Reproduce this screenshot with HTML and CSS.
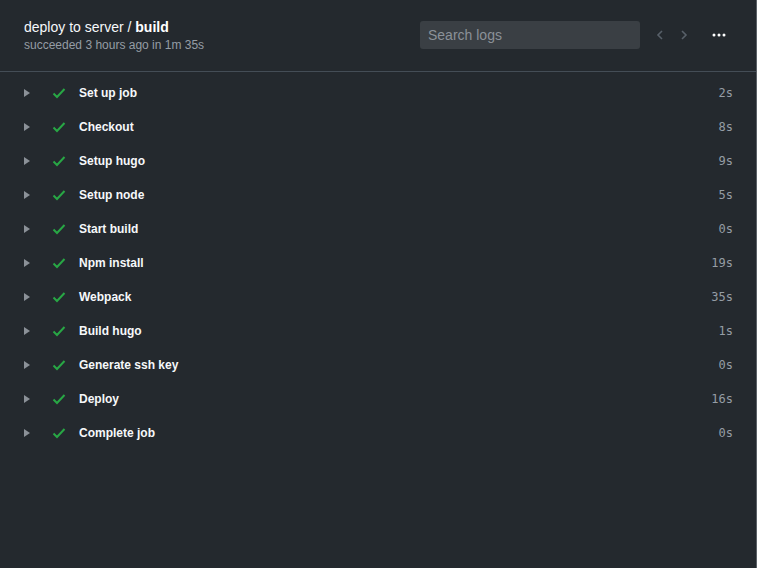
FILE: index.html
```html
<!DOCTYPE html>
<html>
<head>
<meta charset="utf-8">
<link rel="stylesheet" href="styles.css">
</head>
<body>
<div class="panel">
  <header class="head">
    <div class="titles">
      <div class="title">deploy to server / <b>build</b></div>
      <div class="sub">succeeded 3 hours ago in 1m 35s</div>
    </div>
    <div class="tools">
      <input class="search" type="text" placeholder="Search logs">
      <div class="navs">
        <svg class="nav" width="10" height="12" viewBox="0 0 10 12"><path d="M7 2 L3 6 L7 10" fill="none" stroke="currentColor" stroke-width="1.6"/></svg>
        <svg class="nav" width="10" height="12" viewBox="0 0 10 12"><path d="M3 2 L7 6 L3 10" fill="none" stroke="currentColor" stroke-width="1.6"/></svg>
      </div>
      <svg class="more" width="14" height="4" viewBox="0 0 14 4"><circle cx="2" cy="2" r="1.5" fill="#fff"/><circle cx="7" cy="2" r="1.5" fill="#fff"/><circle cx="12" cy="2" r="1.5" fill="#fff"/></svg>
    </div>
  </header>
  <ul class="steps">
    <li class="step"><span class="tri"></span><svg class="check" width="14" height="12" viewBox="0 0 14 12"><path d="M1.5 6.5 L5 10 L12.5 2" fill="none" stroke="#28a745" stroke-width="2"/></svg><span class="name">Set up job</span><span class="dur">2s</span></li>
    <li class="step"><span class="tri"></span><svg class="check" width="14" height="12" viewBox="0 0 14 12"><path d="M1.5 6.5 L5 10 L12.5 2" fill="none" stroke="#28a745" stroke-width="2"/></svg><span class="name">Checkout</span><span class="dur">8s</span></li>
    <li class="step"><span class="tri"></span><svg class="check" width="14" height="12" viewBox="0 0 14 12"><path d="M1.5 6.5 L5 10 L12.5 2" fill="none" stroke="#28a745" stroke-width="2"/></svg><span class="name">Setup hugo</span><span class="dur">9s</span></li>
    <li class="step"><span class="tri"></span><svg class="check" width="14" height="12" viewBox="0 0 14 12"><path d="M1.5 6.5 L5 10 L12.5 2" fill="none" stroke="#28a745" stroke-width="2"/></svg><span class="name">Setup node</span><span class="dur">5s</span></li>
    <li class="step"><span class="tri"></span><svg class="check" width="14" height="12" viewBox="0 0 14 12"><path d="M1.5 6.5 L5 10 L12.5 2" fill="none" stroke="#28a745" stroke-width="2"/></svg><span class="name">Start build</span><span class="dur">0s</span></li>
    <li class="step"><span class="tri"></span><svg class="check" width="14" height="12" viewBox="0 0 14 12"><path d="M1.5 6.5 L5 10 L12.5 2" fill="none" stroke="#28a745" stroke-width="2"/></svg><span class="name">Npm install</span><span class="dur">19s</span></li>
    <li class="step"><span class="tri"></span><svg class="check" width="14" height="12" viewBox="0 0 14 12"><path d="M1.5 6.5 L5 10 L12.5 2" fill="none" stroke="#28a745" stroke-width="2"/></svg><span class="name">Webpack</span><span class="dur">35s</span></li>
    <li class="step"><span class="tri"></span><svg class="check" width="14" height="12" viewBox="0 0 14 12"><path d="M1.5 6.5 L5 10 L12.5 2" fill="none" stroke="#28a745" stroke-width="2"/></svg><span class="name">Build hugo</span><span class="dur">1s</span></li>
    <li class="step"><span class="tri"></span><svg class="check" width="14" height="12" viewBox="0 0 14 12"><path d="M1.5 6.5 L5 10 L12.5 2" fill="none" stroke="#28a745" stroke-width="2"/></svg><span class="name">Generate ssh key</span><span class="dur">0s</span></li>
    <li class="step"><span class="tri"></span><svg class="check" width="14" height="12" viewBox="0 0 14 12"><path d="M1.5 6.5 L5 10 L12.5 2" fill="none" stroke="#28a745" stroke-width="2"/></svg><span class="name">Deploy</span><span class="dur">16s</span></li>
    <li class="step"><span class="tri"></span><svg class="check" width="14" height="12" viewBox="0 0 14 12"><path d="M1.5 6.5 L5 10 L12.5 2" fill="none" stroke="#28a745" stroke-width="2"/></svg><span class="name">Complete job</span><span class="dur">0s</span></li>
  </ul>
</div>
</body>
</html>
```

FILE: styles.css
```css
html, body {
  margin: 0;
  padding: 0;
  height: 100%;
  background: #24292e;
}
.panel {
  box-sizing: border-box;
  height: 568px;
  border-right: 1px solid #5b6167;
  background: #24292e;
  font-family: "Liberation Sans", Arial, sans-serif;
  color: #ffffff;
}
.head {
  box-sizing: border-box;
  height: 72px;
  border-bottom: 1px solid #444d56;
  display: flex;
  align-items: flex-start;
  justify-content: space-between;
  padding: 18px 0 0 24px;
}
.titles {
  display: flex;
  flex-direction: column;
}
.title {
  font-size: 14px;
  line-height: 18px;
  color: #f6f8fa;
}
.title b {
  font-weight: bold;
  color: #ffffff;
}
.sub {
  font-size: 12px;
  line-height: 18px;
  color: #959da5;
}
.tools {
  display: flex;
  align-items: center;
  margin-top: 3px;
  padding-right: 30px;
}
.search {
  box-sizing: border-box;
  width: 220px;
  height: 28px;
  background: #3a3f44;
  border: none;
  border-radius: 3px;
  padding: 0 8px;
  font-family: "Liberation Sans", Arial, sans-serif;
  font-size: 14px;
  color: #d1d5da;
  outline: none;
}
.search::placeholder {
  color: #8b9198;
}
.navs {
  display: flex;
  gap: 14px;
  margin-left: 15px;
  color: #586069;
}
.more {
  margin-left: 23px;
}
.steps {
  list-style: none;
  margin: 0;
  padding: 4px 0 0 0;
}
.step {
  display: flex;
  align-items: center;
  height: 34px;
  padding: 0 23px 0 24px;
}
.tri {
  width: 0;
  height: 0;
  border-top: 4px solid transparent;
  border-bottom: 4px solid transparent;
  border-left: 6px solid #8b9198;
}
.check {
  margin-left: 22px;
}
.name {
  margin-left: 13px;
  font-size: 12px;
  font-weight: bold;
  color: #f6f8fa;
  flex: 1;
}
.dur {
  font-family: "DejaVu Sans Mono", monospace;
  font-size: 12px;
  color: #959da5;
}
```
